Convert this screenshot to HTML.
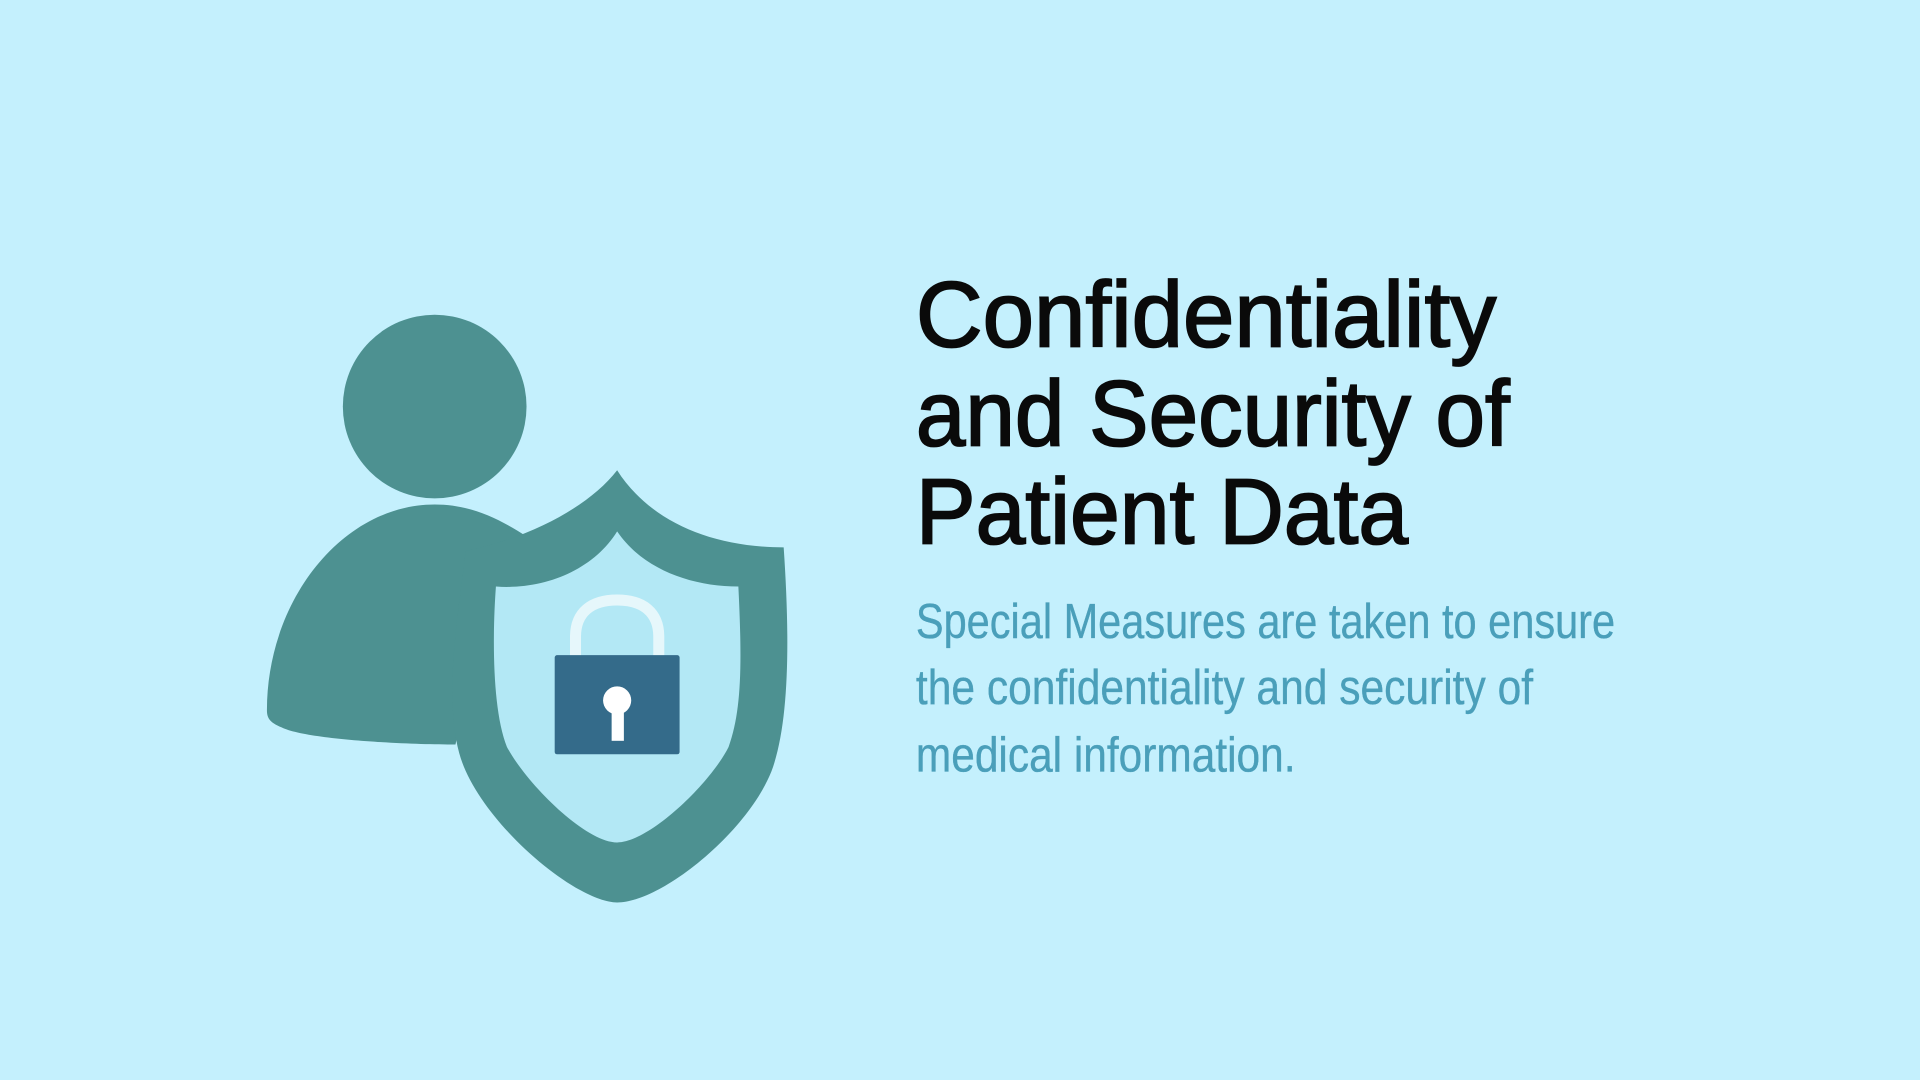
<!DOCTYPE html>
<html><head><meta charset="utf-8"><style>
html,body{margin:0;padding:0;width:1920px;height:1080px;overflow:hidden;background:#c4f0fd}
svg{display:block}
</style></head><body>
<svg width="1920" height="1080" viewBox="0 0 1568 882" xmlns="http://www.w3.org/2000/svg">
<rect width="1568" height="882" fill="#c4f0fd"/>
<circle cx="355" cy="332" r="75" fill="#4d9191"/>
<path d="M218,580 C218,490 280,412 355,412 C385,412 408,424 430,438 L400,470 L372,608 C330,608 250,604 230,594 C220,590 218,586 218,580 Z" fill="#4d9191"/>
<path d="M504,384 C530,425 580,447 640,447 C645,520 645,590 630,630 C610,680 540,737 504,737 C470,737 390,670 375,615 C360,560 380,470 380,450 C430,440 480,415 504,384 Z" fill="#4d9191"/>
<path d="M504,434 C525,465 565,479 603,479 C606,540 606,580 595,610 C580,640 530,688 504,688 C478,688 430,640 414,610 C402,580 402,520 405,479 C445,482 485,465 504,434 Z" fill="#b3e8f5"/>
<path d="M470,536 V520 C470,500 483,490 504,490 C525,490 538,500 538,520 V536" fill="none" stroke="#e6f7fb" stroke-width="9"/>
<rect x="453" y="535" width="102" height="81" rx="2" fill="#346b8a"/>
<circle cx="504" cy="572" r="11.5" fill="#fff"/>
<rect x="499.5" y="576" width="10" height="29" fill="#fff"/>
<g font-family="Liberation Sans, sans-serif" fill="#0a0a0a" stroke="#0a0a0a" stroke-width="1.5">
<text x="748" y="283" font-size="76" textLength="474" lengthAdjust="spacingAndGlyphs">Confidentiality</text>
<text x="748" y="364" font-size="76" textLength="485" lengthAdjust="spacingAndGlyphs">and Security of</text>
<text x="748" y="444" font-size="76" textLength="402" lengthAdjust="spacingAndGlyphs">Patient Data</text>
</g>
<g font-family="Liberation Sans, sans-serif" fill="#4a9fba" stroke="#4a9fba" stroke-width="0.3">
<text x="748" y="521" font-size="40" textLength="571" lengthAdjust="spacingAndGlyphs">Special Measures are taken to ensure</text>
<text x="748" y="575" font-size="40" textLength="504" lengthAdjust="spacingAndGlyphs">the confidentiality and security of</text>
<text x="748" y="630" font-size="40" textLength="310" lengthAdjust="spacingAndGlyphs">medical information.</text>
</g>
</svg>
</body></html>
